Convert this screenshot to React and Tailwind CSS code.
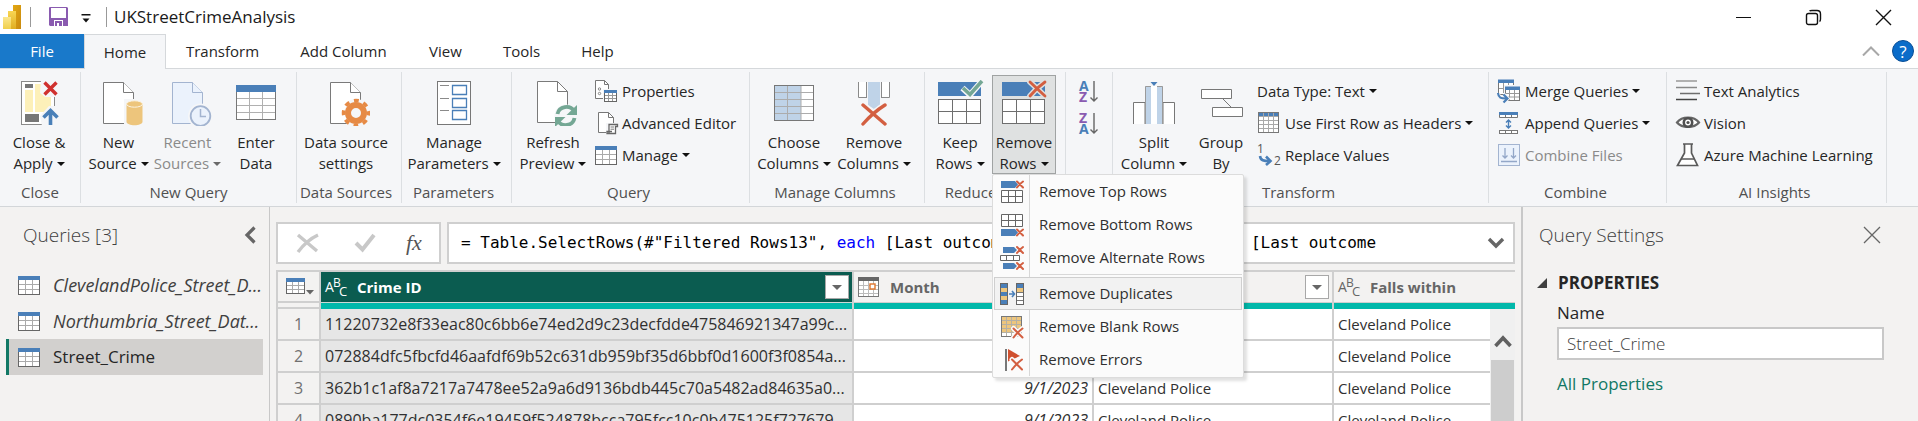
import React from "react";

const CARET = "inline-block h-1 w-[8px] shrink-0";

function Caret({ muted, className = "ml-[5px]" }) {
  return (
    <svg viewBox="0 0 8 4" className={`${CARET} ${className}`} aria-hidden="true">
      <path d="M0 0H8L4 4Z" fill={muted ? "#6a6a6a" : "#111"} />
    </svg>
  );
}

/* ---------- large ribbon icons, 48 x 46 ---------- */

function Big({ children }) {
  return (
    <svg viewBox="0 0 48 46" className="h-[46px] w-12 shrink-0" fill="none" aria-hidden="true">
      {children}
    </svg>
  );
}

function Doc({ fill = "#fff", stroke = "#7a7a7a" }) {
  return (
    <g fill={fill} stroke={stroke}>
      <path d="M8.5 2.5H28.5L38.5 12.5V43.5H8.5Z" />
      <path d="M28.5 2.5V12.5H38.5" />
    </g>
  );
}

function Cross({ x, y, w, h, color = "#d35f41", width = 3, halo }) {
  const d = `M${x} ${y}L${x + w} ${y + h}M${x + w} ${y}Q${x + w * 0.45} ${y + h * 0.4} ${x} ${y + h}`;
  return (
    <g strokeLinecap="round">
      {halo && <path d={d} stroke={halo} strokeWidth={width + 3} />}
      <path d={d} stroke={color} strokeWidth={width} />
    </g>
  );
}

function CloseApplyIcon() {
  return (
    <Big>
      <rect x="6.5" y="1.5" width="33" height="43" fill="#fff" stroke="#8a8a8a" />
      <rect x="10" y="4" width="8" height="4" fill="#777" />
      <path d="M10 10h8v22h-8zM20 4h16v28H20z" fill="#fdf0b9" />
      <rect x="10" y="34" width="14" height="8" fill="#777" />
      <path d="M26 0H46V17H30L25 13Z" fill="#f5f6f8" />
      <path d="M25 36L34 26H44V46H27Z" fill="#f5f6f8" />
      <path d="M29.5 2.5L41.5 14.5M41.5 2.5L29.5 14.5" stroke="#d0312f" strokeWidth="3.4" />
      <path d="M35.5 45V30M28.5 37.5L35.5 30.5L42.5 37.5" stroke="#4a80b8" strokeWidth="3.6" />
    </Big>
  );
}

function NewSourceIcon() {
  return (
    <Big>
      <Doc />
      <path d="M29 19H48V46H29Z" fill="#f5f6f8" />
      <path d="M9 19H29V43H9Z" fill="#fff" />
      <path d="M31.5 23V41.5C31.5 46.500 47.500 46.500 47.500 41.500V23Z" fill="#edc57c" />
      <ellipse cx="39.500" cy="24" rx="8" ry="3.200" fill="#edc57c" stroke="#fbf3e2" />
    </Big>
  );
}

function RecentIcon() {
  return (
    <Big>
      <Doc fill="#ebf2fc" stroke="#a3b4d0" />
      <circle cx="36.500" cy="36" r="12.500" fill="#f5f6f8" />
      <circle cx="36.500" cy="36" r="9.800" fill="#ebf2fc" stroke="#a3b4d0" strokeWidth="1.800" />
      <path d="M36.500 29V36.500H42" stroke="#a3b4d0" strokeWidth="1.500" />
    </Big>
  );
}

function EnterDataIcon() {
  return (
    <Big>
      <rect x="4.500" y="5.500" width="39" height="34" fill="#fff" stroke="#777" />
      <rect x="4" y="5" width="40" height="7" fill="#4a7fb8" />
      <path d="M17.500 12V39M30.500 12V39M5 18.500H43M5 25.500H43M5 32.500H43" stroke="#b0b0b0" />
    </Big>
  );
}

function DataSourceIcon() {
  return (
    <Big>
      <Doc />
      <circle cx="34" cy="33" r="14" fill="#f5f6f8" />
      <path d="M9 20H27L21 33L27 43H9Z" fill="#fff" />
      <circle cx="34" cy="33" r="8" stroke="#e68a45" strokeWidth="6" />
      <circle cx="34" cy="33" r="12.500" stroke="#e68a45" strokeWidth="3.500" strokeDasharray="4.900 4.917" strokeDashoffset="2.450" />
    </Big>
  );
}

function ParametersIcon() {
  return (
    <Big>
      <rect x="7.500" y="1.500" width="33" height="43" fill="#fff" stroke="#777" />
      <path d="M10 5.500H19M10 18.500H19M10 30.500H19" stroke="#8a8a8a" />
      <path d="M22.500 5.500h14v9h-14zM22.500 18.500h14v9h-14zM22.500 30.500h14v9h-14z" stroke="#4a7fb8" strokeWidth="1.300" />
    </Big>
  );
}

function RefreshIcon() {
  return (
    <Big>
      <path d="M8.500 1.500H28.500L38.500 11.500V42.500H8.500Z" fill="#fff" stroke="#7a7a7a" />
      <path d="M28.500 1.500V11.500H38.500" stroke="#7a7a7a" />
      <circle cx="37" cy="36" r="11.500" fill="#f5f6f8" />
      <path d="M28.500 34C30 26 41 24.500 45 31M45.500 38C44 46 33 47.500 29 41" stroke="#74a794" strokeWidth="3.800" />
      <path d="M48 25V35H37.500Z" fill="#74a794" />
      <path d="M26 47V37H36.500Z" fill="#74a794" />
    </Big>
  );
}

function ChooseColumnsIcon() {
  return (
    <Big>
      <rect x="4.500" y="5.500" width="39" height="35" fill="#fff" />
      <rect x="5" y="6" width="26" height="34" fill="#bfd3e8" />
      <path d="M17.500 6V40M31 6V40M5 12.500H43M5 19.500H43M5 26.500H43M5 33.500H43" stroke="#acacac" />
      <rect x="4.500" y="5.500" width="39" height="35" stroke="#777" />
    </Big>
  );
}

function RemoveColumnsIcon() {
  return (
    <Big>
      <path d="M8.500 2V17.500H17V2Z M31 2V17.500H39.500V2Z" fill="#fff" />
      <path d="M8.500 2V17.500H17M31 17.500H39.500V2M16.500 2V17M31.500 2V17" stroke="#8a8a8a" />
      <path d="M18 2H30V25L24 29L18 25Z" fill="#bfd3e8" />
      <Cross x={13} y={25} w={22} h={19} halo="#f5f6f8" width={3.4} />
    </Big>
  );
}

function RowsGrid() {
  return (
    <>
      <rect x="2" y="2" width="43" height="14" fill="#4a7fb8" />
      <rect x="2.500" y="19.500" width="42" height="24" fill="#fff" stroke="#6e6e6e" />
      <path d="M16.500 20V43M30.500 20V43M3 31.500H44" stroke="#6e6e6e" />
    </>
  );
}

function KeepRowsIcon() {
  return (
    <Big>
      <RowsGrid />
      <path d="M26.500 8L34 15L46 1" stroke="#f5f6f8" strokeWidth="6" />
      <path d="M27 8L34 14.500L46 1" stroke="#74a794" strokeWidth="3.600" />
    </Big>
  );
}

function RemoveRowsIcon() {
  return (
    <Big>
      <RowsGrid />
      <Cross x={30} y={2} w={15} h={14} halo="#dfe1e1" width={2.8} />
    </Big>
  );
}

function SplitColumnIcon() {
  return (
    <Big>
      <path d="M3.500 44V22.500H15V44M33 44V22.500H44.500V44" fill="#fff" stroke="#777" />
      <path d="M15 6H33V44H15Z" fill="#fff" />
      <path d="M15 6H21V44H15ZM27 6H33V44H27Z" fill="#bfd3e8" />
      <path d="M15.500 44V6.500H21M27 6.500H32.500V44" stroke="#9a9a9a" />
      <path d="M20.500 2H27.500L24 6Z" fill="#4a7fb8" />
    </Big>
  );
}

function GroupByIcon() {
  return (
    <Big>
      <path d="M4.500 9.500h30v9h-30zM15.500 27.500h30v9h-30z" fill="#fff" stroke="#777" />
      <path d="M26 19L34 27" stroke="#777" />
    </Big>
  );
}

/* ---------- small icons, 24 x 24 ---------- */

function Small({ children }) {
  return (
    <svg viewBox="0 0 24 24" className="size-6 shrink-0 overflow-visible" fill="none" aria-hidden="true">
      {children}
    </svg>
  );
}

function TableIcon() {
  return (
    <Small>
      <rect x="1.500" y="3.500" width="21" height="18" fill="#fff" stroke="#666" />
      <rect x="1" y="3" width="22" height="4" fill="#4a7fb8" />
      <path d="M8.500 7V21M15.500 7V21M2 11.500H22M2 16.500H22" stroke="#aaa" />
    </Small>
  );
}

function PropertiesIcon() {
  return (
    <Small>
      <path d="M1.500 1.500H10.500L14.500 5.500V19.500H1.500Z" fill="#fff" stroke="#777" />
      <path d="M10.500 1.500V5.500H14.500" stroke="#777" />
      <circle cx="5.500" cy="10" r="1.200" stroke="#888" />
      <circle cx="5.500" cy="14.500" r="1.200" stroke="#888" />
      <rect x="9" y="10" width="15" height="14" fill="#f5f6f8" />
      <rect x="10.500" y="11.500" width="12" height="11" fill="#fff" stroke="#666" />
      <rect x="10" y="11" width="13" height="3" fill="#4a7fb8" />
      <path d="M14.500 14V22M18.500 14V22M11 16.500H22M11 19.500H22" stroke="#999" />
    </Small>
  );
}

function EditorIcon() {
  return (
    <Small>
      <path d="M4.500 1.500H14.500L19.500 6.500V21.500H4.500Z" fill="#fff" stroke="#777" />
      <path d="M14.500 1.500V6.500H19.500" stroke="#777" />
      <path d="M12 12H24V24H12Z" fill="#f5f6f8" />
      <path d="M15 22V13.500H23.500V15.500H21.500V22.500H13V20.500H18" fill="#fff" stroke="#666" strokeWidth="1.300" />
      <path d="M16.500 16H20M16.500 18.200H20" stroke="#777" />
    </Small>
  );
}

function HeadersIcon() {
  return (
    <Small>
      <rect x="1.500" y="1.500" width="20" height="20" fill="#fff" stroke="#777" />
      <rect x="2" y="2" width="19" height="3.500" fill="#4a7fb8" />
      <path d="M6.500 2V21M11.500 2V21M16.500 2V21M2 5.500H21M2 9.500H21M2 13.500H21M2 17.500H21" stroke="#a9a9a9" />
      <rect x="1.500" y="1.500" width="20" height="20" stroke="#777" />
    </Small>
  );
}

function ReplaceIcon() {
  return (
    <Small>
      <text x="0" y="10" fontSize="12" fill="#555" fontFamily="Open Sans, sans-serif">1</text>
      <text x="17" y="22" fontSize="12" fill="#555" fontFamily="Open Sans, sans-serif">2</text>
      <path d="M3 13C3.500 17.500 7 18 12 18" stroke="#4a7fb8" strokeWidth="2.600" />
      <path d="M9 13.500L13.500 18L9 22" stroke="#4a7fb8" strokeWidth="2.600" />
    </Small>
  );
}

function MergeIcon() {
  return (
    <Small>
      <path d="M2 4H16V15H2Z" fill="#fff" />
      <path d="M1.500 4V15.500H8M16.500 4V7" stroke="#777" />
      <path d="M1 0.500H17V4H1Z" fill="#4a7fb8" />
      <path d="M6.500 4V14M11.500 4V8M2 9.500H8" stroke="#999" />
      <rect x="7" y="6" width="17" height="18" fill="#f5f6f8" />
      <rect x="8.500" y="8.500" width="14" height="13" fill="#fff" stroke="#777" />
      <rect x="8" y="7.500" width="15" height="3.500" fill="#4a7fb8" />
      <path d="M12.500 11V21M17.500 11V21M9 14.500H22M9 18H22" stroke="#999" />
      <path d="M1 14C1.500 19 4 19.500 9 19.500M6.500 15.500L10.500 19.500L6.500 23.500" stroke="#f5f6f8" strokeWidth="4" />
      <path d="M1 14C1.500 19 4 19.500 9 19.500M6.500 15.500L10.500 19.500L6.500 23.500" stroke="#4a7fb8" strokeWidth="2.200" />
    </Small>
  );
}

function AppendIcon() {
  return (
    <Small>
      <path d="M2.500 3V6.500H20.500V3" fill="#fff" stroke="#777" />
      <rect x="2" y="1" width="19" height="3" fill="#4a7fb8" />
      <path d="M8.500 4V7M14.500 4V7" stroke="#777" />
      <rect x="2.500" y="19.500" width="18" height="3" fill="#fff" stroke="#777" />
      <path d="M8.500 19V22M14.500 19V22" stroke="#777" />
      <path d="M11.500 9V17M9 11.500L11.500 9L14 11.500M9 14.500L11.500 17L14 14.500" stroke="#4a7fb8" strokeWidth="1.400" />
    </Small>
  );
}

function CombineFilesIcon() {
  return (
    <Small>
      <rect x="1.500" y="1.500" width="21" height="21" fill="#ebf2fc" stroke="#a3b4d0" />
      <path d="M8 5V15M5.500 12.500L8 15L10.500 12.500M16.500 5V15M14 12.500L16.500 15L19 12.500M4 18.500H20" stroke="#93a7c8" strokeWidth="1.300" />
    </Small>
  );
}

function TextAnalyticsIcon() {
  return (
    <Small>
      <path d="M0 2H21" stroke="#999" strokeWidth="1.500" />
      <path d="M0 8.500H21" stroke="#888" strokeWidth="1.500" />
      <path d="M4 14.500H24" stroke="#6e6e6e" strokeWidth="1.500" />
      <path d="M0 20.500H21" stroke="#444" strokeWidth="1.500" />
    </Small>
  );
}

function VisionIcon() {
  return (
    <Small>
      <path d="M1 11.500C6 5 18 5 23 11.500C18 17.500 6 17.500 1 11.500Z" fill="#fff" stroke="#666" strokeWidth="2.200" />
      <circle cx="12" cy="11.500" r="4.200" fill="#fff" stroke="#505050" strokeWidth="2.600" />
      <circle cx="12" cy="11.500" r="1.600" fill="#505050" />
    </Small>
  );
}

function FlaskIcon() {
  return (
    <Small>
      <path d="M8.500 1V10L1.500 22.500H21.500L15.500 10V1" fill="#fff" stroke="#5a5a5a" strokeWidth="1.700" />
      <path d="M7 1H17M5 16H18" stroke="#5a5a5a" strokeWidth="1.600" />
    </Small>
  );
}

function SortIcon({ first, second, firstColor, secondColor }) {
  return (
    <Small>
      <text x="1" y="12" fontSize="14" fontWeight="700" fill={firstColor} fontFamily="Open Sans, sans-serif">{first}</text>
      <text x="1" y="23" fontSize="14" fontWeight="700" fill={secondColor} fontFamily="Open Sans, sans-serif">{second}</text>
      <path d="M16 2V22M12.500 18.500L16 22L19.500 18.500" stroke="#666" strokeWidth="1.400" />
    </Small>
  );
}

/* menu icons */

function TopRowsIcon() {
  return (
    <Small>
      <path d="M1 1H15L18 4.500L15 8H1Z" fill="#4a7fb8" />
      <path d="M1.500 10.500h21v12h-21zM8.500 10.500v12M15.500 10.500v12M1.500 16.500h21" fill="#fff" stroke="#666" />
      <Cross x={17} y={1.5} w={6} h={6} width={2} />
    </Small>
  );
}

function BottomRowsIcon() {
  return (
    <Small>
      <path d="M1.500 1.500h21v12h-21zM8.500 1.500v12M15.500 1.500v12M1.500 7.500h21" fill="#fff" stroke="#666" />
      <path d="M1 16H15L18 19.500L15 23H1Z" fill="#4a7fb8" />
      <Cross x={17} y={16.5} w={6} h={6} width={2} />
    </Small>
  );
}

function AlternateRowsIcon() {
  return (
    <Small>
      <path d="M3 1H14L17 4L14 7H3ZM3 17H14L17 20L14 23H3Z" fill="#4a7fb8" />
      <path d="M0.500 9.500h19v5h-19zM6.500 9.500v5M13.500 9.500v5" fill="#fff" stroke="#666" />
      <Cross x={17} y={1} w={6} h={6} width={2} />
      <Cross x={17} y={17} w={6} h={6} width={2} />
    </Small>
  );
}

function DuplicatesIcon() {
  return (
    <Small>
      <path d="M1 1H8V23H1Z" fill="#4a7fb8" />
      <path d="M1 6H8V10H1ZM1 14H8V18H1Z" fill="#edc57c" />
      <rect x="0.500" y="1.500" width="7" height="21" stroke="#666" />
      <path d="M16 1H24V23H16Z" fill="#fff" />
      <path d="M16 1H24V6H16Z" fill="#4a7fb8" />
      <path d="M16 6H24V10H16Z" fill="#edc57c" />
      <path d="M16 10.500H24M16 14.500H24M16 18.500H24" stroke="#777" />
      <rect x="16.500" y="1.500" width="7" height="21" stroke="#666" />
      <path d="M9 12H14M12 9L14.500 12L12 15" stroke="#4a7fb8" strokeWidth="1.600" />
    </Small>
  );
}

function BlankRowsIcon() {
  return (
    <Small>
      <rect x="1.500" y="1.500" width="20" height="20" fill="#fff" />
      <rect x="1.500" y="1.500" width="20" height="16" fill="#edc57c" />
      <path d="M6.500 2V21M11.500 2V21M16.500 2V21M2 5.500H21M2 9.500H21M2 13.500H21M2 17.500H21" stroke="#b5b0a4" />
      <rect x="1.500" y="1.500" width="20" height="20" stroke="#777" />
      <Cross x={13.5} y={13.5} w={9} h={9} width={2} halo="#fbfbfb" />
    </Small>
  );
}

function ErrorsIcon() {
  return (
    <Small>
      <path d="M6 1V23" stroke="#777" strokeWidth="2" />
      <path d="M8 1L20 8L8 13.500Z" fill="#d0502f" />
      <Cross x={12} y={11.5} w={10} h={10} width={2} halo="#fbfbfb" />
    </Small>
  );
}

/* ---------- ribbon parts ---------- */

function Group({ label, width, children, pr = "" }) {
  return (
    <section aria-label={label || "Sort"} className={`flex shrink-0 flex-col border-r border-[#dcdfe2] pt-[3px] ${width} ${pr}`}>
      <div className="flex h-[99px]">{children}</div>
      <div className="mt-2 h-5 text-center leading-5 whitespace-nowrap text-[#505050]">{label}</div>
    </section>
  );
}

function BigButton({ icon, lines, caret, width, muted, active }) {
  return (
    <button
      type="button"
      disabled={muted}
      aria-expanded={active ? true : undefined}
      className={`flex h-[99px] shrink-0 flex-col items-center border leading-[21px] whitespace-nowrap ${width} ${
        muted ? "text-[#8a8a8a]" : "text-[#262626]"
      } ${active ? "border-[#a0a3a3] bg-[#dfe1e1]" : "border-transparent"}`}
    >
      <span className="mt-1 mb-1.5 flex h-[46px]">{icon}</span>
      <span>{lines[0]}</span>
      <span className="flex items-center">
        {lines[1]}
        {caret && <Caret muted={muted} className="ml-1" />}
      </span>
    </button>
  );
}

function SmallButton({ icon, text, caret, muted }) {
  return (
    <button
      type="button"
      disabled={muted}
      className={`flex h-8 items-center gap-1 whitespace-nowrap ${muted ? "text-[#8a8a8a]" : "text-[#262626]"}`}
    >
      {icon}
      <span>{text}</span>
      {caret && <Caret className="ml-0" />}
    </button>
  );
}

const MENU = [
  { text: "Remove Top Rows", icon: <TopRowsIcon /> },
  { text: "Remove Bottom Rows", icon: <BottomRowsIcon /> },
  { text: "Remove Alternate Rows", icon: <AlternateRowsIcon /> },
  { text: "Remove Duplicates", icon: <DuplicatesIcon />, active: true },
  { text: "Remove Blank Rows", icon: <BlankRowsIcon /> },
  { text: "Remove Errors", icon: <ErrorsIcon /> },
];

function RemoveRowsMenu() {
  return (
    <div
      role="menu"
      aria-label="Remove Rows"
      className="absolute top-full left-0 z-20 flex w-[252px] flex-col rounded-[2px] border border-[#dcdcdc] bg-[#fbfbfb] px-px pb-px shadow-[3px_3px_3px_rgba(0,0,0,0.12)]"
    >
      {MENU.map((item) => (
        <React.Fragment key={item.text}>
          {item.active && (
            <div className="flex" role="separator">
              <span className="h-[3px] w-9 border-r border-[#d8d8d8]" />
              <span className="ml-2.5 h-px flex-1 bg-[#d8d8d8]" />
            </div>
          )}
          <button
            type="button"
            role="menuitem"
            className={`flex h-[33px] items-center text-left whitespace-nowrap text-[#303030] ${
              item.active ? "bg-[#f2f2f2] outline-1 -outline-offset-1 outline-[#cfcfcf]" : ""
            }`}
          >
            <span
              className={`flex h-full w-9 shrink-0 items-center justify-center border-r ${
                item.active ? "border-transparent" : "border-[#d8d8d8]"
              }`}
            >
              {item.icon}
            </span>
            <span className="ml-[9px]">{item.text}</span>
          </button>
        </React.Fragment>
      ))}
    </div>
  );
}

function TitleBar() {
  return (
    <header className="flex h-[34px] shrink-0 items-center bg-white">
      <svg viewBox="0 0 18 24" className="ml-[3px] h-6 w-[18px]" aria-hidden="true">
        <defs>
          <linearGradient id="g1" x2="1" y2="1"><stop stopColor="#e3a812" /><stop offset="1" stopColor="#c98a10" /></linearGradient>
          <linearGradient id="g2" x2="0" y2="1"><stop stopColor="#f8d552" /><stop offset="1" stopColor="#e0ae22" /></linearGradient>
          <linearGradient id="g3" x2="0" y2="1"><stop stopColor="#fbe78e" /><stop offset="1" stopColor="#f0cf4a" /></linearGradient>
        </defs>
        <path d="M10 0H18V24H10Z" fill="url(#g1)" />
        <path d="M5 6H13V24H5Z" fill="url(#g2)" />
        <path d="M0 12H8V24H0Z" fill="url(#g3)" />
      </svg>
      <span className="ml-[9px] h-5 w-px bg-[#999]" />
      <button type="button" aria-label="Save" className="ml-[18px]">
        <svg viewBox="0 0 20 20" className="size-5" aria-hidden="true">
          <path d="M0 1Q0 0 1 0H18L19 1V19H1L0 18Z" fill="#8a5bb0" />
          <path d="M2 1H17V11H2ZM5 13H14V19H5Z" fill="#fff" />
          <path d="M6 14H13V19H10V16H8V19H6Z" fill="#8a5bb0" />
        </svg>
      </button>
      <button type="button" aria-label="Customize toolbar" className="ml-3">
        <svg viewBox="0 0 10 10" className="mt-1 size-2.5" aria-hidden="true">
          <path d="M0.500 0H9.500V1.500H0.500ZM1.500 4.500H8.500L5 8.500Z" fill="#111" />
        </svg>
      </button>
      <span className="ml-[15px] h-5 w-px bg-[#999]" />
      <h1 className="ml-[7px] text-[17px] font-normal text-[#1a1a1a]">UKStreetCrimeAnalysis</h1>
      <div className="mr-[26px] ml-auto flex items-center gap-[53px]">
        <button type="button" aria-label="Minimize">
          <svg viewBox="0 0 17 17" className="size-[17px]"><path d="M1 8.500H16" stroke="#111" /></svg>
        </button>
        <button type="button" aria-label="Restore">
          <svg viewBox="0 0 17 17" className="size-[17px]" fill="none" stroke="#111" strokeWidth="1.400">
            <rect x="1.500" y="4.500" width="11" height="11" rx="2" />
            <path d="M4.500 2Q5 1.500 7 1.500H12Q15.500 1.500 15.500 5V10Q15.500 12 14.500 12.500" />
          </svg>
        </button>
        <button type="button" aria-label="Close">
          <svg viewBox="0 0 17 17" className="size-[17px]"><path d="M1 1L16 16M16 1L1 16" stroke="#111" strokeWidth="1.400" /></svg>
        </button>
      </div>
    </header>
  );
}

function Tabs() {
  const base = "flex h-[35px] items-center justify-center border-b border-[#d5d8db] text-[#262626]";
  return (
    <nav aria-label="Ribbon tabs" className="flex h-[35px] shrink-0 bg-white">
      <button type="button" className="flex w-[84px] items-center justify-center border-b border-[#d5d8db] bg-[#1979ca] text-white">File</button>
      <button type="button" aria-current="page" className="flex w-[82px] items-center justify-center border-x border-t border-[#d5d8db] bg-[#f5f6f8] text-[#262626]">Home</button>
      <button type="button" className={`${base} w-[113px]`}>Transform</button>
      <button type="button" className={`${base} w-[129px]`}>Add Column</button>
      <button type="button" className={`${base} w-[75px]`}>View</button>
      <button type="button" className={`${base} w-[77px]`}>Tools</button>
      <button type="button" className={`${base} w-[75px]`}>Help</button>
      <div className="flex flex-1 items-center justify-end gap-3 border-b border-[#d5d8db] pr-1">
        <button type="button" aria-label="Collapse ribbon">
          <svg viewBox="0 0 18 10" className="h-2.5 w-[18px]"><path d="M1 9.500L9 1.500L17 9.500" fill="none" stroke="#a8a8a8" strokeWidth="2" /></svg>
        </button>
        <button type="button" aria-label="Help" className="flex size-[22px] items-center justify-center rounded-full border border-[#0a4f96] bg-[#0a6cc9] text-[17px] leading-none text-white">
          ?
        </button>
      </div>
    </nav>
  );
}

function Ribbon() {
  return (
    <div className="relative z-10 flex h-[138px] shrink-0 border-b border-[#d3d6d9] bg-[#f5f6f8] pt-[3px] pb-[3px]">
      <Group label="Close" width="w-[81px]">
        <BigButton icon={<CloseApplyIcon />} lines={["Close &", "Apply"]} caret width="w-[78px]" />
      </Group>
      <Group label="New Query" width="w-[216px]">
        <span className="w-1" />
        <BigButton icon={<NewSourceIcon />} lines={["New", "Source"]} caret width="w-[67px]" />
        <BigButton icon={<RecentIcon />} lines={["Recent", "Sources"]} caret muted width="w-[71px]" />
        <BigButton icon={<EnterDataIcon />} lines={["Enter", "Data"]} width="w-[66px]" />
      </Group>
      <Group label="Data Sources" width="w-[105px]" pr="pr-1.5">
        <BigButton icon={<DataSourceIcon />} lines={["Data source", "settings"]} width="w-[98px]" />
      </Group>
      <Group label="Parameters" width="w-[110px]" pr="pr-1.5">
        <BigButton icon={<ParametersIcon />} lines={["Manage", "Parameters"]} caret width="w-[104px]" />
      </Group>
      <Group label="Query" width="w-[238px]" pr="pr-1">
        <BigButton icon={<RefreshIcon />} lines={["Refresh", "Preview"]} caret width="w-[82px]" />
        <div className="flex flex-col items-start">
          <SmallButton icon={<PropertiesIcon />} text="Properties" />
          <SmallButton icon={<EditorIcon />} text="Advanced Editor" />
          <SmallButton icon={<TableIcon />} text="Manage" caret />
        </div>
      </Group>
      <Group label="Manage Columns" width="w-[175px]" pr="pr-1">
        <span className="w-1" />
        <BigButton icon={<ChooseColumnsIcon />} lines={["Choose", "Columns"]} caret width="w-20" />
        <BigButton icon={<RemoveColumnsIcon />} lines={["Remove", "Columns"]} caret width="w-20" />
      </Group>
      <Group label="Reduce Rows" width="w-[141px]" pr="pr-2">
        <span className="w-[3px]" />
        <BigButton icon={<KeepRowsIcon />} lines={["Keep", "Rows"]} caret width="w-16" />
        <div className="relative">
          <BigButton icon={<RemoveRowsIcon />} lines={["Remove", "Rows"]} caret active width="w-16" />
          <RemoveRowsMenu />
        </div>
      </Group>
      <Group label="" width="w-[47px]">
        <div className="flex flex-col gap-2 px-3 pt-1">
          <button type="button" aria-label="Sort ascending" className="flex">
            <SortIcon first="A" second="Z" firstColor="#4a7fb8" secondColor="#8a5bb0" />
          </button>
          <button type="button" aria-label="Sort descending" className="flex">
            <SortIcon first="Z" second="A" firstColor="#8a5bb0" secondColor="#4a7fb8" />
          </button>
        </div>
      </Group>
      <Group label="Transform" width="w-[376px]" pr="pr-1">
        <span className="w-0.5" />
        <BigButton icon={<SplitColumnIcon />} lines={["Split", "Column"]} caret width="w-[78px]" />
        <BigButton icon={<GroupByIcon />} lines={["Group", "By"]} width="w-14" />
        <div className="ml-2 flex flex-col items-start">
          <SmallButton text="Data Type: Text" caret />
          <SmallButton icon={<HeadersIcon />} text="Use First Row as Headers" caret />
          <SmallButton icon={<ReplaceIcon />} text="Replace Values" />
        </div>
      </Group>
      <Group label="Combine" width="w-[178px]" pr="pr-1">
        <div className="ml-2 flex flex-col items-start">
          <SmallButton icon={<MergeIcon />} text="Merge Queries" caret />
          <SmallButton icon={<AppendIcon />} text="Append Queries" caret />
          <SmallButton icon={<CombineFilesIcon />} text="Combine Files" muted />
        </div>
      </Group>
      <Group label="AI Insights" width="w-[220px]" pr="pr-1">
        <div className="ml-[9px] flex flex-col items-start">
          <SmallButton icon={<TextAnalyticsIcon />} text="Text Analytics" />
          <SmallButton icon={<VisionIcon />} text="Vision" />
          <SmallButton icon={<FlaskIcon />} text="Azure Machine Learning" />
        </div>
      </Group>
    </div>
  );
}

/* ---------- body ---------- */

function QueriesPane() {
  const items = [
    { name: "ClevelandPolice_Street_D...", italic: true },
    { name: "Northumbria_Street_Dat...", italic: true },
    { name: "Street_Crime", active: true },
  ];
  return (
    <aside className="w-[270px] shrink-0 border-r border-[#c8c8c8] pt-3">
      <div className="flex h-8 items-center justify-between pr-[13px] pl-[23px]">
        <h2 className="text-[19px] font-light text-[#404040]">Queries [3]</h2>
        <button type="button" aria-label="Collapse queries">
          <svg viewBox="0 0 12 18" className="h-[18px] w-3"><path d="M10.500 1.500L3 9L10.500 16.500" fill="none" stroke="#666" strokeWidth="3.200" /></svg>
        </button>
      </div>
      <ul className="mx-[6px] mt-4">
        {items.map((item) => (
          <li key={item.name}>
            <button
              type="button"
              className={`flex h-9 w-full items-center gap-3 border-l-3 pl-2 text-left whitespace-nowrap ${
                item.active ? "border-[#117865] bg-[#d2d0ce] text-[#262626]" : "border-transparent text-[#404040]"
              } ${item.italic ? "text-[18px] italic" : "text-[17px]"}`}
            >
              <TableIcon />
              <span>{item.name}</span>
            </button>
          </li>
        ))}
      </ul>
    </aside>
  );
}

function FormulaBar() {
  return (
    <div className="flex h-[42px] gap-1.5">
      <div className="flex w-[165px] items-center border-2 border-[#cfcfcf] bg-white pl-[18px]">
        <button type="button" aria-label="Cancel">
          <svg viewBox="0 0 24 22" className="h-[22px] w-6" fill="none">
            <path d="M2 3L21 19M22 3Q11 8 2 20" stroke="#c8c8c8" strokeWidth="3.400" />
          </svg>
        </button>
        <button type="button" aria-label="Commit" className="ml-[34px]">
          <svg viewBox="0 0 22 20" className="h-5 w-[22px]" fill="none">
            <path d="M2 10L8.500 16.500L20 2" stroke="#c8c8c8" strokeWidth="4" />
          </svg>
        </button>
        <button type="button" aria-label="Formula" className="ml-[30px] font-['Liberation_Serif',serif] text-[22px] leading-none text-[#555] italic">
          fx
        </button>
      </div>
      <div className="flex min-w-0 flex-1 items-center border-2 border-[#cfcfcf] bg-white pr-2 pl-3">
        <code className="min-w-0 flex-1 overflow-hidden font-['DejaVu_Sans_Mono',monospace] text-[16px] whitespace-pre text-black">
          = Table.SelectRows(#"Filtered Rows13", <span className="text-[#0000ff]">each</span>
          {' [Last outcome category] <> "null" and [Last outcome'}
        </code>
        <button type="button" aria-label="Expand formula">
          <svg viewBox="0 0 18 14" className="h-3.5 w-[18px]" fill="none"><path d="M2 3L9 10L16 3" stroke="#666" strokeWidth="3.400" /></svg>
        </button>
      </div>
    </div>
  );
}

function AbcIcon() {
  return (
    <svg viewBox="0 0 24 20" className="h-5 w-6 shrink-0 overflow-visible" fill="currentColor" fontFamily="Open Sans, sans-serif" fontWeight="400" aria-hidden="true">
      <text x="0" y="15" fontSize="14">A</text>
      <text x="8" y="10" fontSize="12">B</text>
      <text x="14" y="19" fontSize="13">C</text>
    </svg>
  );
}

function CalendarIcon() {
  return (
    <svg viewBox="0 0 22 22" className="size-[22px] shrink-0" fill="none" aria-hidden="true">
      <rect x="0.500" y="1.500" width="20" height="19" fill="#fff" stroke="#777" />
      <rect x="0" y="1" width="21" height="4" fill="#666" />
      <path d="M5.500 5V20M10.500 5V20M15.500 5V20M1 9.500H20M1 13.500H20M1 17.500H20" stroke="#bbb" />
      <rect x="12" y="8" width="5" height="5" fill="#fff" stroke="#e0762c" strokeWidth="1.400" />
    </svg>
  );
}

function FilterButton({ label }) {
  return (
    <button type="button" aria-label={`Filter ${label}`} className="ml-auto flex size-6 items-center justify-center border border-[#a8a8a8] bg-white">
      <svg viewBox="0 0 10 5" className="h-[5px] w-2.5"><path d="M0 0H10L5 5Z" fill="#666" /></svg>
    </button>
  );
}

const ROWS = [
  "11220732e8f33eac80c6bb6e74ed2d9c23decfdde475846921347a99c...",
  "072884dfc5fbcfd46aafdf69b52c631db959bf35d6bbf0d1600f3f0854a...",
  "362b1c1af8a7217a7478ee52a9a6d9136bdb445c70a5482ad84635a0...",
  "0890ba177dc0354f6e19459f524878bcca795fcc10c0b475125f727679...",
];

function DataGrid() {
  const line = "border-r-2 border-b-2 border-[#cfcfcf]";
  const head = "border-[#cfcfcf] border-b bg-[#f3f2f1] p-0 font-bold text-[#666]";
  return (
    <div className="relative mt-1.5">
      <table className="w-full table-fixed border-separate border-spacing-0 border-t-2 border-l-2 border-[#cfcfcf] text-left">
        <colgroup>
          <col className="w-[43px]" />
          <col className="w-[533px]" />
          <col className="w-60" />
          <col className="w-60" />
          <col />
        </colgroup>
        <thead>
          <tr className="h-[31px]">
            <th className={`${line} bg-[#f3f2f1] p-0`}>
              <button type="button" aria-label="Table options" className="ml-2 flex items-end">
                <svg viewBox="0 0 20 17" className="h-[17px] w-5" fill="none">
                  <rect x="0.500" y="0.500" width="18" height="15" fill="#fff" stroke="#666" />
                  <rect width="19" height="4" fill="#4a7fb8" />
                  <path d="M6.500 4V15M12.500 4V15M1 7.500H18M1 11.500H18" stroke="#aaa" />
                </svg>
                <svg viewBox="0 0 8 5" className="h-[5px] w-2"><path d="M0 0H8L4 4.500Z" fill="#666" /></svg>
              </button>
            </th>
            <th scope="col" className="border-r-2 border-b border-r-[#cfcfcf] border-b-[#cfd8d5] bg-[#0b5c50] p-0 font-bold text-white">
              <div className="flex items-center gap-2 pr-[3px] pl-1"><AbcIcon />Crime ID<FilterButton label="Crime ID" /></div>
            </th>
            <th scope="col" className={`${head} border-r-2`}>
              <div className="flex items-center gap-2.5 pr-[3px] pl-1"><CalendarIcon />Month<FilterButton label="Month" /></div>
            </th>
            <th scope="col" className={`${head} border-r-2`}>
              <div className="flex items-center gap-2 pr-[3px] pl-1"><AbcIcon />Reported by<FilterButton label="Reported by" /></div>
            </th>
            <th scope="col" className={head}>
              <div className="flex items-center gap-2 pl-1"><AbcIcon />Falls within</div>
            </th>
          </tr>
          <tr className="h-1.5" aria-hidden="true">
            <td className={`${line} p-0`} />
            <td className="border-r-2 border-[#cfcfcf] bg-[#01b8aa] p-0" />
            <td className="border-r-2 border-[#cfcfcf] bg-[#01b8aa] p-0" />
            <td className="border-r-2 border-[#cfcfcf] bg-[#01b8aa] p-0" />
            <td className="bg-[#01b8aa] p-0" />
          </tr>
        </thead>
        <tbody className="whitespace-nowrap text-[#303030]">
          {ROWS.map((id, i) => (
            <tr key={id} className="h-8">
              <td className={`${line} p-0 text-center text-[16px] text-[#707070]`}>{i + 1}</td>
              <td className={`${line} overflow-hidden bg-[#e6e6e6] p-0 pl-1 text-[16px]`}>{id}</td>
              <td className={`${line} bg-white p-0 pr-1 text-right text-[16px] italic`}>9/1/2023</td>
              <td className={`${line} bg-white p-0 pl-1`}>Cleveland Police</td>
              <td className="border-b-2 border-[#cfcfcf] bg-white p-0 pl-1">Cleveland Police</td>
            </tr>
          ))}
        </tbody>
      </table>
      <div className="absolute top-[39px] right-0 bottom-0 flex w-[25px] flex-col items-center bg-[#f0f0f0]">
        <svg viewBox="0 0 18 14" className="mt-[25px] h-3.5 w-[18px]" fill="none"><path d="M1.500 12L9 4L16.500 12" stroke="#606060" strokeWidth="3.600" /></svg>
        <div className="mt-3 w-[23px] flex-1 bg-[#cdcdcd]" />
      </div>
    </div>
  );
}

function SettingsPane() {
  return (
    <aside className="w-[397px] shrink-0 border-l-2 border-[#c8c8c8] pt-3 pl-4 text-[17px] text-[#262626]">
      <div className="flex h-8 items-center justify-between pr-[37px]">
        <h2 className="text-[19px] font-light text-[#404040]">Query Settings</h2>
        <button type="button" aria-label="Close settings">
          <svg viewBox="0 0 18 18" className="size-[18px]"><path d="M1 1L17 17M17 1L1 17" stroke="#666" strokeWidth="1.300" /></svg>
        </button>
      </div>
      <h3 className="mt-4 -ml-0.5 flex h-8 items-center font-bold">
        <svg viewBox="0 0 10 10" className="mr-[11px] size-2.5"><path d="M10 0V10H0Z" fill="#404040" /></svg>
        PROPERTIES
      </h3>
      <div className="pr-[34px] pl-[18px]">
        <label htmlFor="query-name" className="block h-7 leading-7">Name</label>
        <input
          id="query-name"
          type="text"
          defaultValue="Street_Crime"
          className="block h-[33px] w-full border-2 border-[#c8c8c8] bg-white px-2 font-light text-[#404040]"
        />
        <a href="#properties" className="mt-[11px] block text-[#117865]">All Properties</a>
      </div>
    </aside>
  );
}

export default function App() {
  return (
    <div className="flex h-screen flex-col overflow-hidden bg-[#f3f2f1] font-['Open_Sans',sans-serif] text-[15px]">
      <TitleBar />
      <Tabs />
      <Ribbon />
      <div className="flex min-h-0 flex-1 overflow-hidden">
        <QueriesPane />
        <main className="min-w-0 flex-1 pt-[15px] pr-1.5 pl-1.5">
          <FormulaBar />
          <DataGrid />
        </main>
        <SettingsPane />
      </div>
    </div>
  );
}
